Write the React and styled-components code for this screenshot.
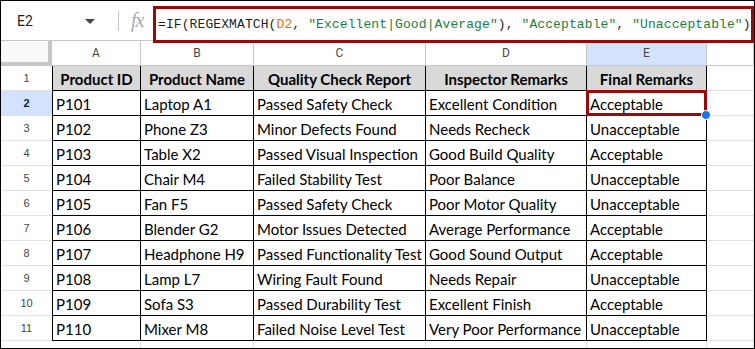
import styled, { createGlobalStyle } from "styled-components";

const rows = [
  ["P101", "Laptop A1", "Passed Safety Check", "Excellent Condition", "Acceptable"],
  ["P102", "Phone Z3", "Minor Defects Found", "Needs Recheck", "Unacceptable"],
  ["P103", "Table X2", "Passed Visual Inspection", "Good Build Quality", "Acceptable"],
  ["P104", "Chair M4", "Failed Stability Test", "Poor Balance", "Unacceptable"],
  ["P105", "Fan F5", "Passed Safety Check", "Poor Motor Quality", "Unacceptable"],
  ["P106", "Blender G2", "Motor Issues Detected", "Average Performance", "Acceptable"],
  ["P107", "Headphone H9", "Passed Functionality Test", "Good Sound Output", "Acceptable"],
  ["P108", "Lamp L7", "Wiring Fault Found", "Needs Repair", "Unacceptable"],
  ["P109", "Sofa S3", "Passed Durability Test", "Excellent Finish", "Acceptable"],
  ["P110", "Mixer M8", "Failed Noise Level Test", "Very Poor Performance", "Unacceptable"],
];

const headers = ["Product ID", "Product Name", "Quality Check Report", "Inspector Remarks", "Final Remarks"];
const letters = ["A", "B", "C", "D", "E"];

const App = () => {
  return (
    <>
      <GlobalStyle />
      <Frame>
        <Toolbar>
          <NameBox>
            <span>E2</span>
            <Caret />
          </NameBox>
          <Divider />
          <Fx>fx</Fx>
          <FormulaBox>
            <Tok>=IF(REGEXMATCH(</Tok>
            <Tok $c="#e37400">D2</Tok>
            <Tok>, </Tok>
            <Tok $c="#188038">"Excellent|Good|Average"</Tok>
            <Tok>), </Tok>
            <Tok $c="#188038">"Acceptable"</Tok>
            <Tok>, </Tok>
            <Tok $c="#188038">"Unacceptable"</Tok>
            <Tok>)</Tok>
          </FormulaBox>
        </Toolbar>

        <Sheet>
          <Corner />
          {letters.map((l) => (
            <ColHead key={l} $active={l === "E"}>{l}</ColHead>
          ))}
          <ColHead />

          <RowHead>1</RowHead>
          {headers.map((h, i) => (
            <Cell key={h} $header $first={i === 0}>{h}</Cell>
          ))}
          <Blank />

          {rows.map((r, ri) => (
            <Row key={r[0]} r={r} n={ri + 2} />
          ))}

          <RowHead>12</RowHead>
          {letters.map((l) => (
            <Blank key={l} />
          ))}
          <Blank />
        </Sheet>
      </Frame>
    </>
  );
};

const Row = ({ r, n }) => (
  <>
    <RowHead $active={n === 2}>{n}</RowHead>
    {r.map((v, i) => (
      <Cell key={i} $first={i === 0} $selected={n === 2 && i === 4}>
        {v}
        {n === 2 && i === 4 && <Handle />}
      </Cell>
    ))}
    <Blank />
  </>
);

const GlobalStyle = createGlobalStyle`
  body {
    margin: 0;
    background: #fff;
  }
`;

// Frame
const Frame = styled.div`
  width: 755px;
  height: 349px;
  box-sizing: border-box;
  border: 1px solid #000;
  overflow: hidden;
  background: #fff;
  font-family: Roboto, "Liberation Sans", sans-serif;
`;

// Toolbar
const Toolbar = styled.div`
  height: 40px;
  box-sizing: border-box;
  border-bottom: 1px solid #c4c7c5;
  display: flex;
  align-items: flex-start;
`;

const NameBox = styled.div`
  width: 106px;
  height: 39px;
  display: flex;
  align-items: center;
  justify-content: space-between;
  padding: 0 12px 0 16px;
  box-sizing: border-box;
  font-size: 14px;
  color: #1f1f1f;
`;

const Caret = styled.span`
  width: 0;
  height: 0;
  border-left: 5px solid transparent;
  border-right: 5px solid transparent;
  border-top: 5px solid #444746;
  margin-top: 1px;
`;

const Divider = styled.div`
  width: 1px;
  height: 20px;
  margin: 10px 0 0 11px;
  background: #c4c7c5;
`;

const Fx = styled.div`
  height: 39px;
  width: 22px;
  margin-left: 12px;
  display: flex;
  align-items: center;
  font-family: "Liberation Serif", serif;
  font-style: italic;
  font-size: 20px;
  color: #a8abaf;
  letter-spacing: -1px;
`;

const FormulaBox = styled.div`
  position: relative;
  z-index: 2;
  margin: 5px 0 0 0;
  width: 601px;
  height: 37px;
  box-sizing: border-box;
  border: 3px solid #980a0a;
  background: #fff;
  display: flex;
  align-items: center;
  padding-left: 2px;
  white-space: pre;
  font-family: "Liberation Mono", monospace;
  font-size: 13px;
  letter-spacing: 0.1px;
  color: #1f1f1f;
`;

const Tok = styled.span`
  color: ${(p) => p.$c || "#1f1f1f"};
`;

// Sheet grid
const Sheet = styled.div`
  display: grid;
  grid-template-columns: 51px 89px 113px 172px 161px 120px 1fr;
  grid-auto-rows: 25px;
`;

const Corner = styled.div`
  background: #f8f9fa;
  border-right: 4px solid #c7c7c7;
  border-bottom: 4px solid #c7c7c7;
  box-sizing: border-box;
`;

const ColHead = styled.div`
  box-sizing: border-box;
  border-right: 1px solid #c4c7c5;
  border-bottom: 1px solid #c4c7c5;
  background: ${(p) => (p.$active ? "#d3e3fd" : "#fff")};
  display: flex;
  align-items: center;
  justify-content: center;
  font-size: 12px;
  color: #444746;
`;

const RowHead = styled.div`
  box-sizing: border-box;
  border-bottom: 1px solid #e1e1e1;
  background: ${(p) => (p.$active ? "#d3e3fd" : "#fff")};
  display: flex;
  align-items: center;
  justify-content: center;
  font-family: "Liberation Sans", Arial, sans-serif;
  font-size: 11px;
  font-weight: ${(p) => (p.$active ? 700 : 400)};
  color: ${(p) => (p.$active ? "#0b1f4a" : "#444746")};
`;

const Cell = styled.div`
  position: relative;
  box-sizing: border-box;
  border-right: 1px solid #000;
  border-bottom: 1px solid #000;
  border-left: ${(p) => (p.$first ? "1px solid #000" : "none")};
  background: ${(p) => (p.$header ? "#d9d9d9" : "#fff")};
  display: flex;
  align-items: center;
  justify-content: ${(p) => (p.$header ? "center" : "flex-start")};
  padding-left: ${(p) => (p.$header ? "0" : "3px")};
  padding-top: 1px;
  white-space: nowrap;
  font-family: Lato, "Liberation Sans", sans-serif;
  font-size: 15px;
  font-weight: ${(p) => (p.$header ? 700 : 400)};
  color: #000;
  ${(p) =>
    p.$selected &&
    `
    &::after {
      content: "";
      position: absolute;
      inset: -1px -1px -1px -1px;
      border: 3px solid #980a0a;
    }
  `}
`;

const Handle = styled.span`
  position: absolute;
  right: -5px;
  bottom: -5px;
  width: 8px;
  height: 8px;
  border-radius: 50%;
  background: #1a73e8;
  border: 1px solid #fff;
  z-index: 3;
`;

const Blank = styled.div`
  box-sizing: border-box;
  border-right: 1px solid #e1e1e1;
  border-bottom: 1px solid #e1e1e1;
`;

export default App;
